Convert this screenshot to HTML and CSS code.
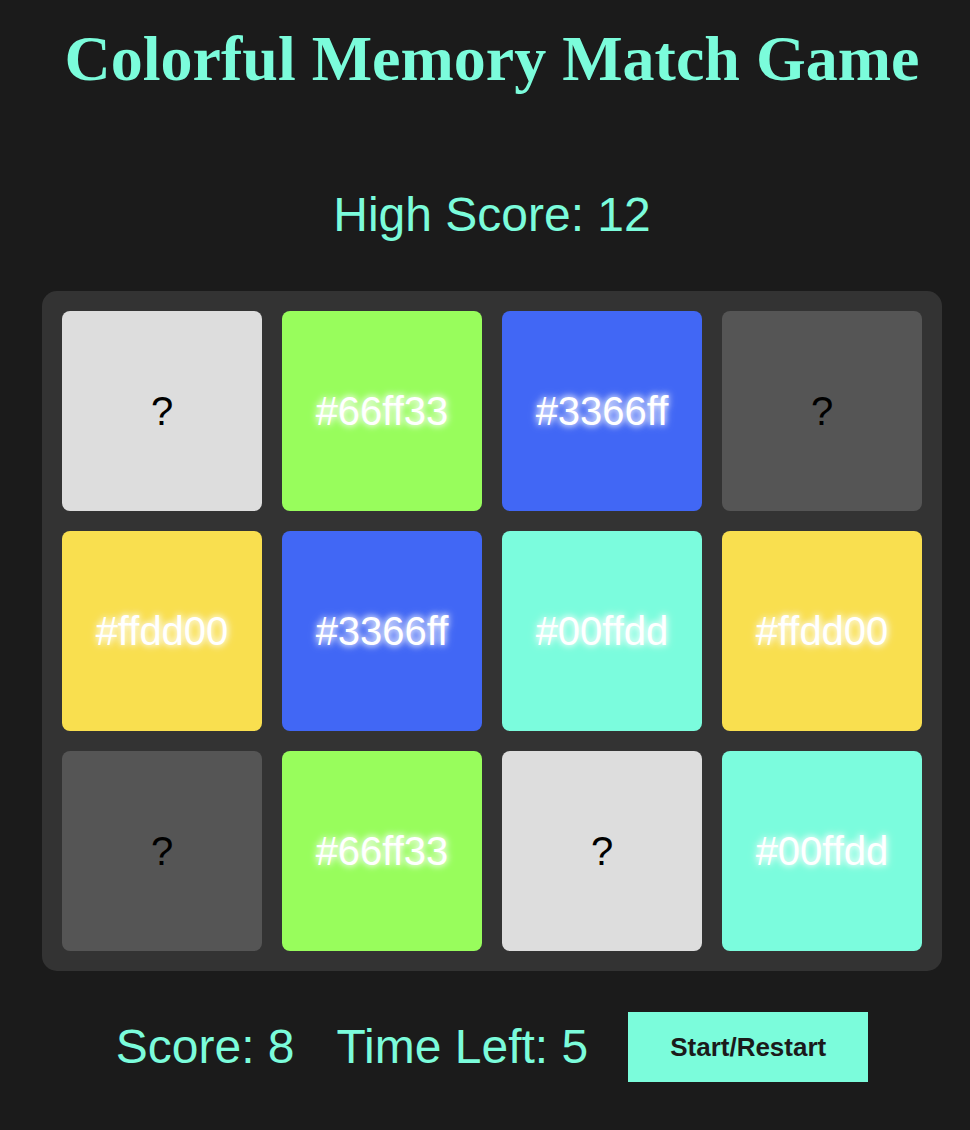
FILE: index.html
```html
<!DOCTYPE html>
<html lang="en">
<head>
<meta charset="utf-8">
<title>Colorful Memory Match Game</title>
<link rel="stylesheet" href="styles.css">
</head>
<body>
<main class="page">
  <h1 class="title">Colorful Memory Match Game</h1>
  <div class="high-score">High Score: 12</div>
  <div class="board">
    <div class="card back-light">?</div>
    <div class="card green">#66ff33</div>
    <div class="card blue">#3366ff</div>
    <div class="card back-dark">?</div>
    <div class="card yellow">#ffdd00</div>
    <div class="card blue">#3366ff</div>
    <div class="card teal">#00ffdd</div>
    <div class="card yellow">#ffdd00</div>
    <div class="card back-dark">?</div>
    <div class="card green">#66ff33</div>
    <div class="card back-light">?</div>
    <div class="card teal">#00ffdd</div>
  </div>
  <div class="status">
    <span class="stat">Score: 8</span>
    <span class="stat stat-last">Time Left: 5</span>
    <button class="restart">Start/Restart</button>
  </div>
</main>
</body>
</html>
```
FILE: styles.css
```css
html, body {
  margin: 0;
  padding: 0;
  background: #1b1b1b;
}
body {
  font-family: "Liberation Sans", Arial, sans-serif;
  color: #7bfcdb;
}
.page {
  display: flex;
  flex-direction: column;
  align-items: center;
  padding-left: 14px;
}
.title {
  font-family: "Liberation Serif", "Times New Roman", serif;
  font-weight: bold;
  font-size: 64px;
  line-height: 74px;
  margin: 22px 0 0;
  color: #7bfcdb;
}
.high-score {
  font-size: 48px;
  line-height: 56px;
  margin-top: 91px;
}
.board {
  margin-top: 48px;
  background: #333333;
  border-radius: 15px;
  padding: 20px;
  display: grid;
  grid-template-columns: repeat(4, 200px);
  grid-auto-rows: 200px;
  gap: 20px;
}
.card {
  border-radius: 8px;
  display: flex;
  align-items: center;
  justify-content: center;
  font-size: 40px;
  color: #ffffff;
  text-shadow: 0 0 6px #ffffff, 0 0 10px rgba(255,255,255,0.7);
}
.back-light, .back-dark {
  color: #000000;
  text-shadow: none;
}
.back-light { background: #dddddd; }
.back-dark { background: #555555; }
.green { background: #98fd5c; }
.blue { background: #4167f5; }
.yellow { background: #f9df4f; }
.teal { background: #7bfcdd; }
.status {
  display: flex;
  align-items: center;
  margin-top: 41px;
}
.stat {
  font-size: 48px;
  line-height: 56px;
  margin-right: 42px;
}
.stat-last {
  margin-right: 40px;
}
.restart {
  width: 240px;
  height: 70px;
  border: none;
  background: #7bfcdb;
  color: #1b1b1b;
  font-family: "Liberation Sans", Arial, sans-serif;
  font-weight: bold;
  font-size: 26px;
  padding: 0;
  cursor: pointer;
}
```
